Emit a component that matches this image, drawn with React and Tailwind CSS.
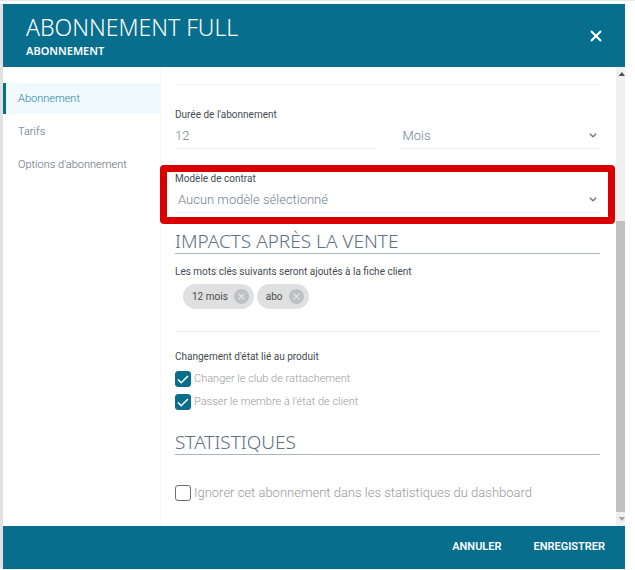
import { useState } from 'react'

const navItems = [
  { id: 'abonnement', label: 'Abonnement' },
  { id: 'tarifs', label: 'Tarifs' },
  { id: 'options', label: "Options d'abonnement" }
]

function Chevron() {
  return (
    <svg className="pointer-events-none absolute right-[3px] top-2 w-2 h-2 text-[#6b7c8b]" viewBox="0 0 8 8" fill="none" stroke="currentColor" aria-hidden="true">
      <path strokeWidth="1.5" d="M.8 2.8L4 5.8l3.2-3" />
    </svg>
  )
}

function SectionTitle({ children }) {
  return (
    <h2 className="border-b border-[#a9b6c1] font-['Noto_Sans'] text-[19px] leading-6 font-light text-[#607080]">
      {children}
    </h2>
  )
}

function Chip({ label, onRemove }) {
  return (
    <li className="flex h-[25px] items-center gap-1.5 rounded-full bg-[#e0e0e0] pl-[9px] pr-[5px] text-[#4a4a4a]">
      {label}
      <button type="button" onClick={onRemove} aria-label={`Retirer ${label}`}>
        <svg className="w-[15px] h-[15px]" viewBox="0 0 14 14" aria-hidden="true">
          <circle cx="7" cy="7" r="7" fill="#bcc1c5" />
          <path d="M4.3 4.3l5.4 5.4M9.7 4.3l-5.4 5.4" stroke="#e6e6e6" strokeWidth="1.2" />
        </svg>
      </button>
    </li>
  )
}

function Checkbox({ label, defaultChecked, className }) {
  return (
    <label className="flex items-center gap-[3px] text-[#999]">
      <span className="relative w-4 h-4">
        <input
          type="checkbox"
          defaultChecked={defaultChecked}
          className="peer block w-4 h-4 appearance-none rounded-[3px] border border-[#6e6e6e] bg-white checked:border-[#086e8d] checked:bg-[#086e8d]"
        />
        <svg className="pointer-events-none absolute inset-0 hidden w-4 h-4 peer-checked:block" viewBox="0 0 16 16" fill="none" stroke="#fff" strokeWidth="1.6" aria-hidden="true">
          <path d="M3 8.5l3.2 3.2L13 5" />
        </svg>
      </span>
      <span className={className}>{label}</span>
    </label>
  )
}

function Scrollbar() {
  return (
    <div className="flex w-[9px] flex-col items-center bg-[#f0f0f0]" aria-hidden="true">
      <svg className="w-[9px] h-3.5" viewBox="0 0 9 14"><path d="M2.5 9L6 5l3 4z" fill="#505050" /></svg>
      <div className="w-full flex-[140]" />
      <div className="w-full flex-[291] bg-[#c1c1c1]" />
      <svg className="w-[9px] h-3.5" viewBox="0 0 9 14"><path d="M2.5 5L6 9l3-4z" fill="#a3a3a3" /></svg>
    </div>
  )
}

export default function App() {
  const [active, setActive] = useState('abonnement')
  const [tags, setTags] = useState(['12 mois', 'abo'])

  return (
    <div className="min-h-screen border-t border-[#e3e8ea] bg-white pt-[3px] pr-[10px] font-[Roboto,sans-serif]">
      <div className="border-l-[3px] border-[#e0e2e2]">
        <header className="flex items-center justify-between bg-[#086e8d] px-[23px] py-2 font-['Noto_Sans'] text-white">
          <div>
            <h1 className="text-[23px] leading-[30px] font-light">ABONNEMENT FULL</h1>
            <p className="text-[11px] leading-[17px] font-semibold">ABONNEMENT</p>
          </div>
          <button type="button" aria-label="Fermer">
            <svg className="w-3 h-3" viewBox="0 0 12 12" fill="none" stroke="currentColor" strokeWidth="2" aria-hidden="true">
              <path d="M1 1l10 10M11 1L1 11" />
            </svg>
          </button>
        </header>

        <div className="flex">
          <nav className="flex w-[158px] shrink-0 flex-col gap-0.5 border-r border-[#f7f7f7] pt-4">
            {navItems.map(item => (
              <a
                key={item.id}
                href={`#${item.id}`}
                onClick={() => setActive(item.id)}
                className={`border-l-[3px] pl-3 text-[11px] leading-[31px] font-light ${active === item.id ? 'border-[#086e8d] bg-[#f0fafc] text-[#1b7f9c]' : 'border-transparent text-[#5a6873]'}`}
              >
                {item.label}
              </a>
            ))}
          </nav>

          <form className="min-w-0 flex-1 pl-3.5 pr-4 pb-[25px] text-[10px] leading-4 text-[#454b50]">
            <hr className="mt-[17px] border-[#f3f3f3]" />

            <div className="mt-[22px] grid grid-cols-2 items-end gap-6">
              <div>
                <label htmlFor="duree" className="block">Durée de l'abonnement</label>
                <input
                  id="duree"
                  defaultValue="12"
                  className="block h-[26px] w-full border-b border-[#f0f0f0] text-[13px] font-light text-[#71818f] outline-none"
                />
              </div>
              <div className="relative">
                <select
                  aria-label="Unité de durée"
                  className="block h-[26px] w-full appearance-none border-b border-[#f0f0f0] pl-[3px] text-[13px] font-light text-[#71818f] outline-none"
                >
                  <option>Mois</option>
                  <option>Années</option>
                </select>
                <Chevron />
              </div>
            </div>

            <div className="relative mt-[22px]">
              <label htmlFor="modele" className="block">Modèle de contrat</label>
              <div className="relative">
                <select
                  id="modele"
                  className="block h-[26px] w-full appearance-none border-b border-[#f0f0f0] pl-[3px] text-[13px] font-light text-[#71818f] outline-none"
                >
                  <option>Aucun modèle sélectionné</option>
                </select>
                <Chevron />
              </div>
              <div className="pointer-events-none absolute -inset-x-[15px] -top-[6px] -bottom-[11px] rounded-[4px] border-[7px] border-[#d90000]" />
            </div>

            <div className="mt-4">
              <SectionTitle>IMPACTS APRÈS LA VENTE</SectionTitle>
            </div>
            <p className="mt-2.5">Les mots clés suivants seront ajoutés à la fiche client</p>
            <ul className="mt-1 flex gap-[3px] pl-2">
              {tags.map(tag => (
                <Chip key={tag} label={tag} onRemove={() => setTags(tags.filter(t => t !== tag))} />
              ))}
            </ul>

            <hr className="mt-[22px] border-[#ececec]" />

            <fieldset className="mt-[17px]">
              <legend>Changement d'état lié au produit</legend>
              <div className="flex flex-col gap-[7px] pt-1.5 text-[11px] leading-4 font-light">
                <Checkbox label="Changer le club de rattachement" defaultChecked />
                <Checkbox label="Passer le membre à l'état de client" defaultChecked />
              </div>
            </fieldset>

            <div className="mt-5">
              <SectionTitle>STATISTIQUES</SectionTitle>
            </div>
            <div className="mt-[30px]">
              <Checkbox label="Ignorer cet abonnement dans les statistiques du dashboard" className="text-[13px] font-light" />
            </div>
          </form>

          <Scrollbar />
        </div>

        <footer className="flex h-[43px] items-center justify-end gap-8 bg-[#086e8d] pr-5 text-[11px] font-semibold text-white">
          <button type="button">ANNULER</button>
          <button type="button">ENREGISTRER</button>
        </footer>
      </div>
    </div>
  )
}
